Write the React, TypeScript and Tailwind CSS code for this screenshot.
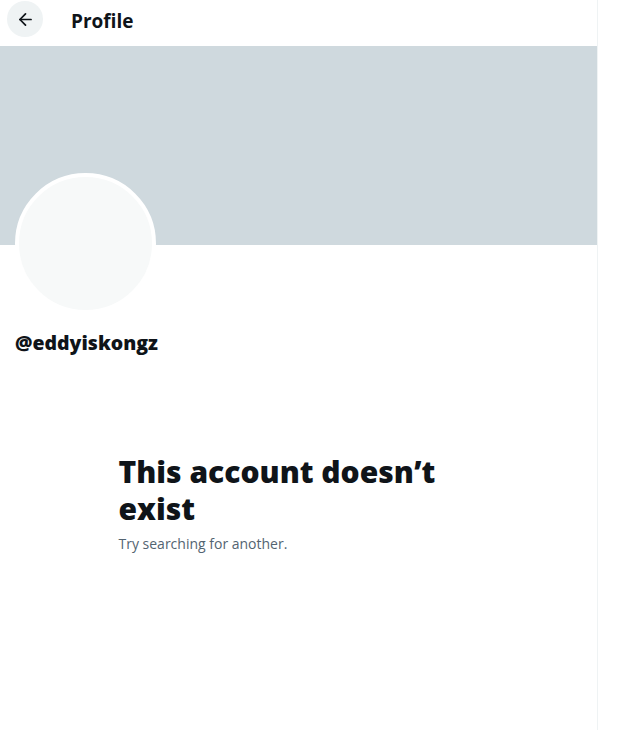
import { ArrowLeft } from "lucide-react";

const FONT = "font-['Segoe_UI','Open_Sans','Noto_Sans',sans-serif]";

function Header() {
  return (
    <div className="h-[46px] bg-white">
      <div className="flex h-[38px] items-center gap-7 pl-[7px]">
        <button
          aria-label="Back"
          className="flex h-9 w-9 items-center justify-center rounded-full bg-[#eff3f4] text-[#0f1419]"
        >
          <ArrowLeft size={19} strokeWidth={2.2} />
        </button>
        <h2 className="mt-[3px] text-[19px] font-bold leading-6 text-[#0f1419]">Profile</h2>
      </div>
    </div>
  );
}

export default function App() {
  return (
    <div className={`flex min-h-[730px] w-[618px] bg-white ${FONT}`}>
      <main className="w-[598px] border-r border-[#eff3f4]">
        <Header />

        <div className="h-[199px] bg-[#cfd9de]" />

        <div className="px-[15px]">
          <div className="-mt-[72px] h-[141px] w-[141px] rounded-full border-4 border-white bg-[#f7f9f9]" />
          <div className="mt-[17px] text-[19.5px] font-extrabold leading-6 text-[#0f1419]">
            @eddyiskongz
          </div>
        </div>

        <div className="mx-auto mt-[98px] w-[360px]">
          <h1 className="text-[30px] font-extrabold leading-[37px] text-[#0f1419]">
            This account doesn’t exist
          </h1>
          <p className="mt-[7px] text-[14px] leading-5 text-[#536471]">
            Try searching for another.
          </p>
        </div>
      </main>
    </div>
  );
}
